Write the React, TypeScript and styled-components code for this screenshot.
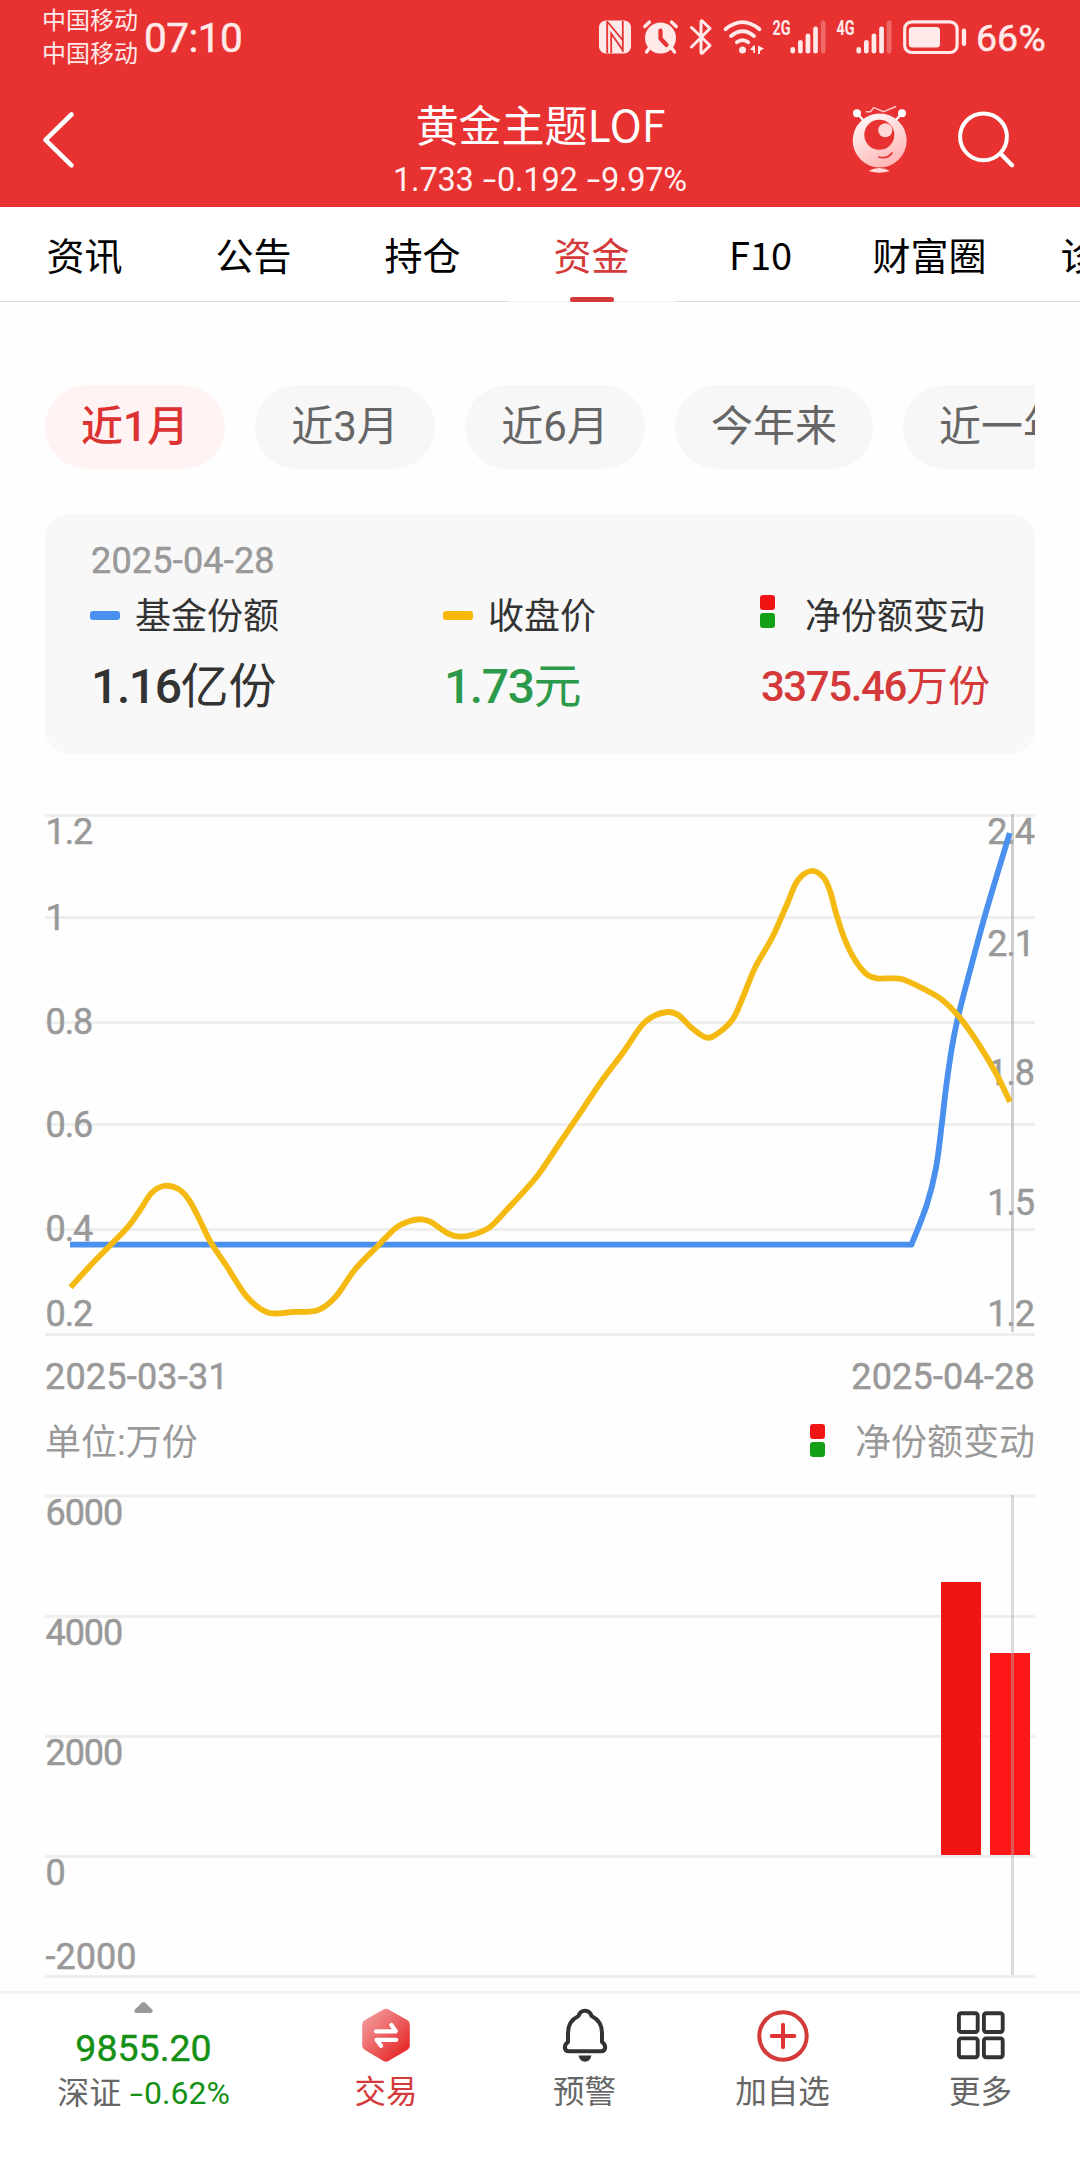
import React from "react";
import styled, { createGlobalStyle } from "styled-components";

const RED = "#e83131";
const ACCENT = "#d43a3a";

const GlobalStyle = createGlobalStyle`
  * { box-sizing: border-box; }
  body {
    margin: 0;
    background: #fff;
    font-family: Roboto, "Noto Sans CJK SC", sans-serif;
  }
`;

const Screen = styled.div`
  width: 1080px;
  height: 2160px;
  display: flex;
  flex-direction: column;
  overflow: hidden;
  background: #fefefe;
`;

/* ---------- header ---------- */

const Header = styled.header`
  height: 207px;
  flex: none;
  background: ${RED};
  color: #fff;
`;

const StatusBar = styled.div`
  height: 75px;
  padding: 0 36px 0 42px;
  display: flex;
  align-items: center;
  color: #ffe9e9;
`;

const Carriers = styled.div`
  display: flex;
  flex-direction: column;
  font-size: 24px;
  line-height: 33px;
  width: 96px;
  padding-top: 1px;
  white-space: nowrap;
`;

const Clock = styled.div`
  margin-left: 6px;
  font-size: 40.5px;
  line-height: 48px;
  letter-spacing: -0.5px;
  padding-top: 1px;
  -webkit-text-stroke: 0.5px currentColor;
`;

const StatusIcons = styled.div`
  margin-left: auto;
  display: flex;
  align-items: center;
  gap: 12px;
  padding-bottom: 2px;
  svg { display: block; flex: none; overflow: visible; }
`;

const BatteryText = styled.div`
  width: 68px;
  margin-left: -3px;
  font-size: 37.5px;
  line-height: 44px;
  padding-top: 3px;
  -webkit-text-stroke: 0.5px currentColor;
`;

const NavBar = styled.div`
  height: 132px;
  display: grid;
  grid-template-columns: 240px 1fr 240px;
  svg { display: block; overflow: visible; }
`;

const BackButton = styled.div`
  padding: 36px 0 0 42px;
`;

const TitleBlock = styled.div`
  display: flex;
  flex-direction: column;
  align-items: center;
  white-space: nowrap;
`;

const Title = styled.div`
  margin-top: 18px;
  padding-left: 1px;
  font-size: 43px;
  line-height: 60px;
  font-family: "Noto Sans CJK SC", sans-serif;
`;

const Quote = styled.div`
  margin-top: 8px;
  font-size: 32.5px;
  line-height: 38px;
  letter-spacing: -0.25px;
  color: #fff1f1;
`;

const Minus = styled.span`
  display: inline-block;
  transform: scaleX(1.5);
  margin: 0 3px 0 4px;
`;

const NavActions = styled.div`
  display: flex;
  gap: 50px;
  padding: 30px 0 0 12px;
`;

/* ---------- tabs ---------- */

const Tabs = styled.nav`
  height: 96px;
  flex: none;
  display: flex;
  overflow: hidden;
  background: #fff;
`;

const Tab = styled.div<{ $active?: boolean }>`
  flex: 0 0 169px;
  height: 95px;
  display: flex;
  flex-direction: column;
  align-items: center;
  justify-content: space-between;
  border-bottom: 1px solid ${(p) => (p.$active ? "#eeeeee" : "#dcdcdc")};
  font-size: 38px;
  line-height: 56px;
  padding-top: 19px;
  white-space: nowrap;
  color: ${(p) => (p.$active ? ACCENT : "#000")};
  font-family: "Noto Sans CJK SC", sans-serif;
`;

const TabMark = styled.div`
  width: 44px;
  height: 5px;
  border-radius: 2px;
  margin-bottom: -1px;
  background: ${ACCENT};
`;

/* ---------- content ---------- */

const Content = styled.main`
  flex: 1;
  min-height: 0;
  padding: 82px 45px 0;
  display: flex;
  flex-direction: column;
`;

const Pills = styled.div`
  height: 84px;
  flex: none;
  display: flex;
  gap: 30px;
  overflow: hidden;
`;

const Pill = styled.div<{ $active?: boolean }>`
  flex: none;
  min-width: 180px;
  height: 84px;
  padding: 0 36px;
  border-radius: 42px;
  display: flex;
  align-items: center;
  justify-content: center;
  white-space: nowrap;
  font-size: 42px;
  line-height: 60px;
  font-weight: ${(p) => (p.$active ? 500 : 400)};
  color: ${(p) => (p.$active ? "#dc3232" : "#666")};
  background: ${(p) => (p.$active ? "#fff3f3" : "#f7f7f7")};
`;

const Card = styled.section`
  margin-top: 45px;
  height: 240px;
  flex: none;
  border-radius: 24px;
  background: #f8f8f8;
  padding: 26px 45px 0;
`;

const DateText = styled.span`
  font-size: 36px;
  line-height: 42px;
  letter-spacing: 0.2px;
  color: #999;
  -webkit-text-stroke: 0.5px #999;
`;

const CardDate = styled(DateText)`
  display: block;
  padding-left: 1px;
`;

const Stats = styled.div`
  display: flex;
  justify-content: space-between;
  margin-top: 7px;
`;

const Stat = styled.div`
  display: flex;
  flex-direction: column;
`;

const Legend = styled.div<{ $muted?: boolean; $gap?: number }>`
  display: flex;
  align-items: center;
  gap: ${(p) => p.$gap ?? 15}px;
  height: 54px;
  font-size: 36px;
  line-height: 54px;
  white-space: nowrap;
  color: ${(p) => (p.$muted ? "#999" : "#333")};
  span { padding-top: ${(p) => (p.$muted ? 0 : 2)}px; }
`;

const Dash = styled.i<{ $color: string }>`
  width: 30px;
  height: 9px;
  border-radius: 3px;
  margin-bottom: 2px;
  background: ${(p) => p.$color};
`;

const Squares = styled.i<{ $lift: number }>`
  display: flex;
  flex-direction: column;
  gap: 3px;
  margin-bottom: ${(p) => p.$lift}px;
  &::before, &::after {
    content: "";
    width: 15px;
    height: 15px;
    border-radius: 3px;
  }
  &::before { background: #f01414; }
  &::after { background: #14a014; }
`;

const Value = styled.div<{ $color: string; $size: number }>`
  height: 72px;
  margin-top: 8px;
  font-size: ${(p) => p.$size}px;
  line-height: 72px;
  white-space: nowrap;
  color: ${(p) => p.$color};
`;

const Digits = styled.span`
  font-weight: 500;
  letter-spacing: -1.4px;
  margin-left: 1px;
`;

const LineChart = styled.svg`
  display: block;
  flex: none;
  margin-top: 46px;
`;

const Row = styled.div<{ $top: number }>`
  display: flex;
  align-items: center;
  justify-content: space-between;
  margin-top: ${(p) => p.$top}px;
`;

const Unit = styled.span`
  font-size: 36px;
  line-height: 54px;
  color: #999;
`;

const BarChart = styled.svg`
  display: block;
  flex: none;
  margin-top: 24px;
`;

/* ---------- bottom bar ---------- */

const BottomBar = styled.footer`
  height: 169px;
  flex: none;
  border-top: 3px solid #f3f3f3;
  background: #fff;
  display: grid;
  grid-template-columns: 287px repeat(4, 198px);
  svg { display: block; overflow: visible; }
`;

const IndexCell = styled.div`
  display: flex;
  flex-direction: column;
  align-items: center;
  padding-top: 8px;
`;

const IndexValue = styled.div`
  margin-top: 13px;
  font-size: 37.5px;
  line-height: 44px;
  color: #149014;
  -webkit-text-stroke: 0.4px currentColor;
`;

const IndexRow = styled.div`
  display: flex;
  gap: 7px;
  font-size: 32px;
  line-height: 46px;
  color: #666;
  white-space: nowrap;
  em { font-style: normal; color: #149014; }
`;

const Action = styled.div<{ $accent?: boolean }>`
  display: flex;
  flex-direction: column;
  align-items: center;
  padding: 14px 0 0 ${(p) => (p.$accent ? 0 : 1)}px;
  font-size: 31.5px;
  line-height: 46px;
  color: ${(p) => (p.$accent ? ACCENT : "#666")};
  span { margin-top: 6px; }
`;

/* ---------- icons ---------- */

const NfcIcon = () => (
  <svg width="32" height="34" viewBox="0 0 32 34">
    <rect x="0" y="0.5" width="32" height="33" rx="7" fill="currentColor" />
    <path d="M8.2 1 V33 M8.2 1.5 L24 20.5" fill="none" stroke={RED} strokeWidth="1.8" />
    <path d="M12.2 33 V13.5 L24 30.5 M23.8 1 V32" fill="none" stroke={RED} strokeWidth="1.8" />
  </svg>
);

const AlarmIcon = () => (
  <svg width="35" height="34" viewBox="0 0 35 34">
    <circle cx="17.5" cy="18" r="15.5" fill="currentColor" />
    <path d="M1.8 6.5 L6.5 2 M33.2 6.5 L28.5 2 M6 28.5 L3.5 32 M29 28.5 L31.5 32" stroke="currentColor" strokeWidth="3.4" strokeLinecap="round" />
    <path d="M17.5 10.5 V18.5 L23.5 25" fill="none" stroke={RED} strokeWidth="4.2" strokeLinecap="round" strokeLinejoin="round" />
  </svg>
);

const BluetoothIcon = () => (
  <svg width="22" height="36" viewBox="0 0 22 36">
    <path d="M1.5 8.5 L20 26.5 L12.5 34 Q11 35 11 33 V3 Q11 1 12.5 2.2 L20 9.5 L1.5 28" fill="none" stroke="currentColor" strokeWidth="3" strokeLinecap="round" strokeLinejoin="round" />
  </svg>
);

const WifiIcon = () => (
  <svg width="37" height="34" viewBox="0 0 37 34">
    <g fill="none" stroke="currentColor" strokeWidth="3.8" strokeLinecap="round">
      <path d="M1.5 9.2 Q18.5 -5 35.5 9.2" />
      <path d="M7 16 Q18.5 6.5 30 16" />
      <path d="M12.8 22.3 Q18.5 18 24.2 22.3" />
    </g>
    <circle cx="18.5" cy="30" r="3.5" fill="currentColor" />
    <path d="M31 25.5 V33 H29.3 V30.5 L26 29.5 L29.5 25.5Z M34 25.5 L40 28.5 L36 31 V34 H34Z" fill="currentColor" />
  </svg>
);

const SignalIcon = ({ label, width }: { label: string; width: number }) => (
  <svg width={width} height="34" viewBox={`${52 - width} 0 ${width} 34`}>
    <text x={51.5 - width} y="15.2" fontSize="20.5" fontWeight="700" fontFamily="Roboto, sans-serif" fill="currentColor" textLength="18" lengthAdjust="spacingAndGlyphs">
      {label}
    </text>
    {[27, 20, 13.5, 6.5, 0.5].map((y, i) => (
      <rect key={y} x={17.4 + i * 7.6} y={y} width="4.7" height={33.5 - y} rx="2.3" fill="currentColor" opacity={i === 4 ? 0.3 : 1} />
    ))}
  </svg>
);

const BatteryIcon = () => (
  <svg width="64" height="34" viewBox="0 0 64 34">
    <rect x="1.7" y="1.9" width="52.4" height="30.6" rx="7" fill="none" stroke="currentColor" strokeWidth="3.2" />
    <rect x="5.8" y="6.9" width="31.2" height="20.6" rx="3.5" fill="currentColor" />
    <rect x="58.8" y="8.5" width="4.3" height="17.5" rx="2" fill="currentColor" />
  </svg>
);

const BackIcon = () => (
  <svg width="34" height="58" viewBox="0 0 34 58">
    <path d="M29.5 3.5 L3.5 28.8 L29.5 54.3" fill="none" stroke="#fff" strokeWidth="4.6" strokeLinecap="round" strokeLinejoin="round" />
  </svg>
);

const MascotIcon = () => (
  <svg width="56" height="70" viewBox="12 10 56 70">
    <defs>
      <linearGradient id="mascot" x1="0" y1="0" x2="0.5" y2="1">
        <stop offset="0" stopColor="#fff" />
        <stop offset="1" stopColor="#ffb9b9" />
      </linearGradient>
    </defs>
    <path d="M17 18.3 L24 26 M62 18.3 L55 26" stroke="#fff" strokeWidth="2.2" />
    <circle cx="17" cy="18.3" r="4" fill="#fff" />
    <circle cx="62" cy="18.3" r="4" fill="#fff" />
    <path d="M25.7 16.8 H30.5 L33.8 12.6 L43.5 16.8 L56 11.5" fill="none" stroke="#ffc9c9" strokeWidth="1.5" />
    <circle cx="39.7" cy="45.5" r="27" fill="url(#mascot)" />
    <circle cx="39.3" cy="39.8" r="15" fill={RED} />
    <circle cx="45.3" cy="35.3" r="7" fill="#ffd9d9" />
    <path d="M38.3 62 Q48 64.5 52.3 57.5" fill="none" stroke={RED} strokeWidth="1.7" />
    <path d="M28.5 76 Q39.3 70 50 76 Q39.3 79.5 28.5 76Z" fill="#ffd9d9" />
  </svg>
);

const SearchIcon = () => (
  <svg width="58" height="60" viewBox="0 0 58 60">
    <circle cx="25.5" cy="31.8" r="23.4" fill="none" stroke="#fff" strokeWidth="4" />
    <path d="M42.5 48.5 L54 60.2" stroke="#fff" strokeWidth="4.4" strokeLinecap="round" />
  </svg>
);

const TradeIcon = () => (
  <svg width="48" height="56" viewBox="0 0 48 56">
    <defs>
      <linearGradient id="trade" x1="0.1" y1="0.1" x2="0.85" y2="0.9">
        <stop offset="0" stopColor="#f29a9a" />
        <stop offset="1" stopColor="#e62828" />
      </linearGradient>
    </defs>
    <path d="M21.5 1.4 Q24 0 26.5 1.4 L45.2 12 Q47.8 13.5 47.8 16.4 V37.6 Q47.8 40.5 45.2 42 L26.5 53 Q24 54.4 21.5 53 L2.8 42 Q0.2 40.5 0.2 37.6 V16.4 Q0.2 13.5 2.8 12Z" fill="url(#trade)" />
    <path d="M14 23.3 H33.8 L29.4 17 M34.2 31.8 H14.5 L19 37.8" fill="none" stroke="#fff" strokeWidth="4.2" strokeLinecap="round" strokeLinejoin="round" />
  </svg>
);

const BellIcon = () => (
  <svg width="46" height="56" viewBox="0 0 46 56">
    <path d="M16.5 8 Q18 2.7 23 2.7 Q28 2.7 29.5 8 Q40 13 40 25 V34 Q43.2 36 43.2 39.8 Q42.8 43.3 39 43.3 H7 Q3.2 43.3 2.8 39.8 Q2.8 36 6 34 V25 Q6 13 16.5 8Z" fill="none" stroke="#333" strokeWidth="4" strokeLinejoin="round" />
    <path d="M16.5 47.5 H29.5 Q28 53.7 23 53.7 Q18 53.7 16.5 47.5Z" fill="#333" />
  </svg>
);

const AddIcon = () => (
  <svg width="52" height="56" viewBox="0 0 52 56">
    <circle cx="26" cy="28" r="23.7" fill="none" stroke={ACCENT} strokeWidth="4" />
    <path d="M26 16.7 V39.3 M14.7 28 H37.3" stroke="#e03333" strokeWidth="4" strokeLinecap="round" />
  </svg>
);

const MoreIcon = () => (
  <svg width="48" height="56" viewBox="0 0 48 56">
    {[1.9, 26.9].map((x) =>
      [5.2, 30.4].map((y) => (
        <rect key={`${x}-${y}`} x={x} y={y} width="18.8" height="18.8" rx="2.2" fill="none" stroke="#333" strokeWidth="3.9" />
      ))
    )}
  </svg>
);

/* ---------- chart data ---------- */

type Point = [number, number];

const priceLine: Point[] = [
  [70.6, 1287.3], [90.2, 1265.7], [109.5, 1246], [128.1, 1226.7], [141.2, 1208.3], [151.5, 1193],
  [163.6, 1186], [178, 1188.7], [188.7, 1199.5], [199.7, 1220], [210.7, 1242.3], [226.6, 1266],
  [246.2, 1296], [267.6, 1312.5], [292.7, 1312], [317.5, 1310.3], [335.7, 1296.7], [354.7, 1269.8],
  [377, 1246.7], [396, 1227.7], [409.8, 1221], [421.8, 1219.3], [431, 1222], [447.7, 1233.4],
  [459.7, 1236.7], [473.5, 1234.5], [489.7, 1227.3], [508, 1208.5], [536.7, 1176.7], [556, 1148.5],
  [578.3, 1115.7], [600, 1083.3], [622.3, 1053.5], [641.7, 1025.5], [653.3, 1016.3], [667.7, 1012],
  [678.3, 1015], [693.3, 1029.3], [706.7, 1037.7], [718.3, 1033], [733.3, 1018.3], [744, 994.5],
  [755, 967.7], [772.3, 937.3], [786.7, 905], [797.3, 881], [811, 871], [823.3, 877.3],
  [830, 891], [836.7, 915.5], [845, 940], [855, 960], [866.7, 974.3], [876.7, 978.3],
  [890, 978.4], [903.3, 979.5], [923.3, 988.8], [941.7, 999.5], [960, 1017.9], [978.3, 1043.6],
  [996.7, 1074.5], [1009.9, 1101.8],
];

const shareRise: Point[] = [
  [911.5, 1244.6], [926.7, 1205], [936, 1168], [941.7, 1125], [946.3, 1085.7], [952.5, 1044],
  [959, 1013], [971.7, 964.3], [984.3, 917.9], [996.7, 876], [1009.7, 833],
];

/** Catmull-Rom spline through the points, as cubic Bézier segments. */
const smooth = (pts: Point[]) =>
  pts.slice(1).reduce((d, p, i) => {
    const a = pts[Math.max(0, i - 1)];
    const b = pts[i];
    const c = pts[Math.min(pts.length - 1, i + 2)];
    const k = 6;
    return `${d} C${b[0] + (p[0] - a[0]) / k} ${b[1] + (p[1] - a[1]) / k} ${p[0] - (c[0] - b[0]) / k} ${p[1] - (c[1] - b[1]) / k} ${p[0]} ${p[1]}`;
  }, `${pts[0][0]} ${pts[0][1]}`);

const leftTicks: [string, number][] = [
  ["1.2", 831], ["1", 917], ["0.8", 1020.5], ["0.6", 1124], ["0.4", 1228], ["0.2", 1313],
];
const rightTicks: [string, number][] = [
  ["2.4", 831], ["2.1", 943], ["1.8", 1072], ["1.5", 1201.8], ["1.2", 1313],
];
const barTicks: [string, number][] = [
  ["6000", 1512.5], ["4000", 1632.5], ["2000", 1752.5], ["0", 1872], ["-2000", 1956.5],
];

const AxisLabel = styled.text<{ $tight?: boolean }>`
  font-family: Roboto, sans-serif;
  font-size: 36px;
  letter-spacing: ${(p) => (p.$tight ? "-1.1px" : "0")};
  fill: #999;
  stroke: #999;
  stroke-width: 0.5px;
`;

const tabs = ["资讯", "公告", "持仓", "资金", "F10", "财富圈", "诊股"];
const ranges = ["近1月", "近3月", "近6月", "今年来", "近一年"];

export default function App() {
  return (
    <Screen>
      <GlobalStyle />
      <Header>
        <StatusBar>
          <Carriers>
            <span>中国移动</span>
            <span>中国移动</span>
          </Carriers>
          <Clock>07:10</Clock>
          <StatusIcons>
            <NfcIcon />
            <AlarmIcon />
            <BluetoothIcon />
            <WifiIcon />
            <SignalIcon label="2G" width={52} />
            <SignalIcon label="4G" width={54} />
            <BatteryIcon />
            <BatteryText>66%</BatteryText>
          </StatusIcons>
        </StatusBar>
        <NavBar>
          <BackButton><BackIcon /></BackButton>
          <TitleBlock>
            <Title>黄金主题LOF</Title>
            <Quote>1.733 <Minus>-</Minus>0.192 <Minus>-</Minus>9.97%</Quote>
          </TitleBlock>
          <NavActions>
            <MascotIcon />
            <SearchIcon />
          </NavActions>
        </NavBar>
      </Header>

      <Tabs>
        {tabs.map((t) => (
          <Tab key={t} $active={t === "资金"}>
            {t}
            {t === "资金" && <TabMark />}
          </Tab>
        ))}
      </Tabs>

      <Content>
        <Pills>
          {ranges.map((r, i) => (
            <Pill key={r} $active={i === 0}>{r}</Pill>
          ))}
        </Pills>

        <Card>
          <CardDate>2025-04-28</CardDate>
          <Stats>
            <Stat>
              <Legend><Dash $color="#4a90ee" /><span>基金份额</span></Legend>
              <Value $color="#333" $size={48}><Digits>1.16</Digits>亿份</Value>
            </Stat>
            <Stat>
              <Legend><Dash $color="#f8b80a" /><span>收盘价</span></Legend>
              <Value $color="#2b9a4a" $size={48}><Digits>1.73</Digits>元</Value>
            </Stat>
            <Stat>
              <Legend $gap={30}><Squares $lift={9} /><span>净份额变动</span></Legend>
              <Value $color={ACCENT} $size={42}><Digits>3375.46</Digits>万份</Value>
            </Stat>
          </Stats>
        </Card>

        <LineChart width="990" height="545" viewBox="45 800 990 545">
          {[815.5, 917.5, 1022.5, 1124.5, 1229.5, 1334.5].map((y) => (
            <path key={y} d={`M45 ${y} H1035`} stroke="#eeeeee" strokeWidth="3" />
          ))}
          {leftTicks.map(([t, y]) => (
            <AxisLabel key={t} $tight x="45.5" y={y + 13}>{t}</AxisLabel>
          ))}
          {rightTicks.map(([t, y]) => (
            <AxisLabel key={t} $tight x="1034" y={y + 13} textAnchor="end">{t}</AxisLabel>
          ))}
          <path d="M1012.5 814 V1332" stroke="#afafaf" strokeOpacity="0.6" strokeWidth="3" />
          <path d={`M70 1244.6 L${smooth(shareRise)}`} fill="none" stroke="#4a90ee" strokeWidth="5.8" strokeLinejoin="round" />
          <path d={`M${smooth(priceLine)}`} fill="none" stroke="#f5ba12" strokeWidth="5.8" strokeLinejoin="round" />
        </LineChart>

        <Row $top={11}>
          <DateText>2025-03-31</DateText>
          <DateText>2025-04-28</DateText>
        </Row>
        <Row $top={18}>
          <Unit>单位:万份</Unit>
          <Legend $muted $gap={30}><Squares $lift={6} /><span>净份额变动</span></Legend>
        </Row>

        <BarChart width="990" height="485" viewBox="45 1494 990 485">
          {[1496, 1616.5, 1736.5, 1856.5, 1976.5].map((y) => (
            <path key={y} d={`M45 ${y} H1035`} stroke="#eeeeee" strokeWidth="3" />
          ))}
          {barTicks.map(([t, y]) => (
            <AxisLabel key={t} $tight={t !== "-2000"} x="45.5" y={y + 12.5}>{t}</AxisLabel>
          ))}
          <rect x="941" y="1582" width="40" height="273" fill="#f01414" />
          <rect x="990" y="1653" width="40" height="202" fill="#ff1818" />
          <path d="M1012.5 1495 V1975" stroke="#afafaf" strokeOpacity="0.43" strokeWidth="3" />
        </BarChart>
      </Content>

      <BottomBar>
        <IndexCell>
          <svg width="19" height="11" viewBox="0 0 19 11">
            <path d="M7.5 1 Q9.5 -0.8 11.5 1 L18.3 7.8 Q19.5 10 17 11 H2 Q-0.5 10 0.7 7.8Z" fill="#999" />
          </svg>
          <IndexValue>9855.20</IndexValue>
          <IndexRow>深证<em><Minus>-</Minus>0.62%</em></IndexRow>
        </IndexCell>
        <Action $accent><TradeIcon /><span>交易</span></Action>
        <Action><BellIcon /><span>预警</span></Action>
        <Action><AddIcon /><span>加自选</span></Action>
        <Action><MoreIcon /><span>更多</span></Action>
      </BottomBar>
    </Screen>
  );
}
